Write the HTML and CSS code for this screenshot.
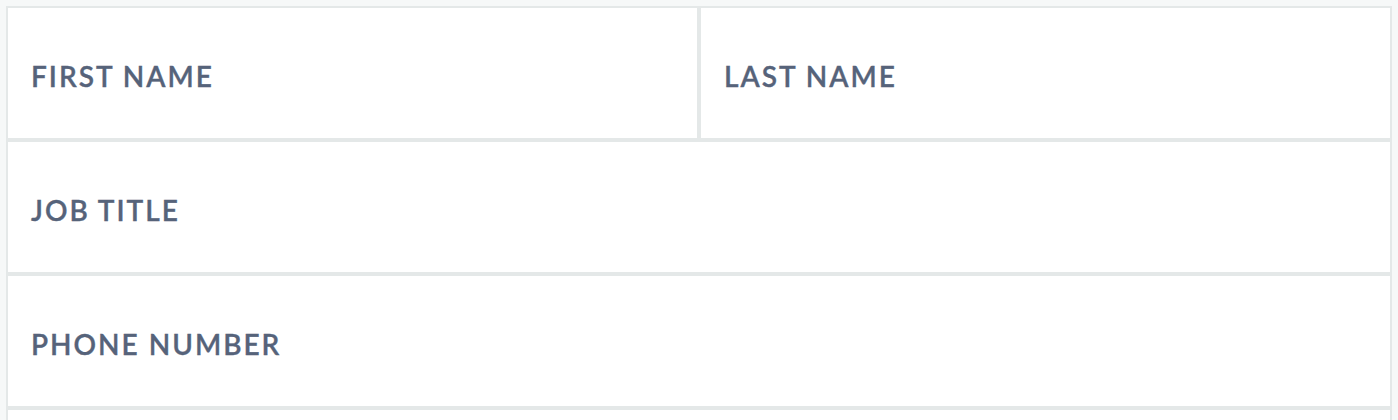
FILE: index.html
```html
<!DOCTYPE html>
<html>
<head>
<meta charset="utf-8">
<link rel="stylesheet" href="styles.css">
</head>
<body>
<div class="form">
  <div class="cell"><span class="label">First name</span></div>
  <div class="cell"><span class="label">Last name</span></div>
  <div class="cell wide"><span class="label">Job title</span></div>
  <div class="cell wide"><span class="label">Phone number</span></div>
  <div class="cell wide"></div>
</div>
</body>
</html>
```
FILE: styles.css
```css
html, body {
  margin: 0;
  padding: 0;
  background: #f6f8f8;
  height: 420px;
  overflow: hidden;
}
.form {
  display: grid;
  grid-template-columns: 1fr 1fr;
  grid-auto-rows: 134px;
  margin: 6px 6px 0 6px;
}
.cell {
  background: #ffffff;
  border: 2px solid #e4e8e8;
  display: flex;
  align-items: center;
  padding: 6px 24px 0 23px;
  box-sizing: border-box;
}
.wide {
  grid-column: span 2;
}
.label {
  font-family: Lato, "Open Sans", sans-serif;
  font-weight: 600;
  font-size: 28px;
  color: #56637a;
  text-transform: uppercase;
  letter-spacing: 2px;
  -webkit-text-stroke: 0.35px #56637a;
}
```
